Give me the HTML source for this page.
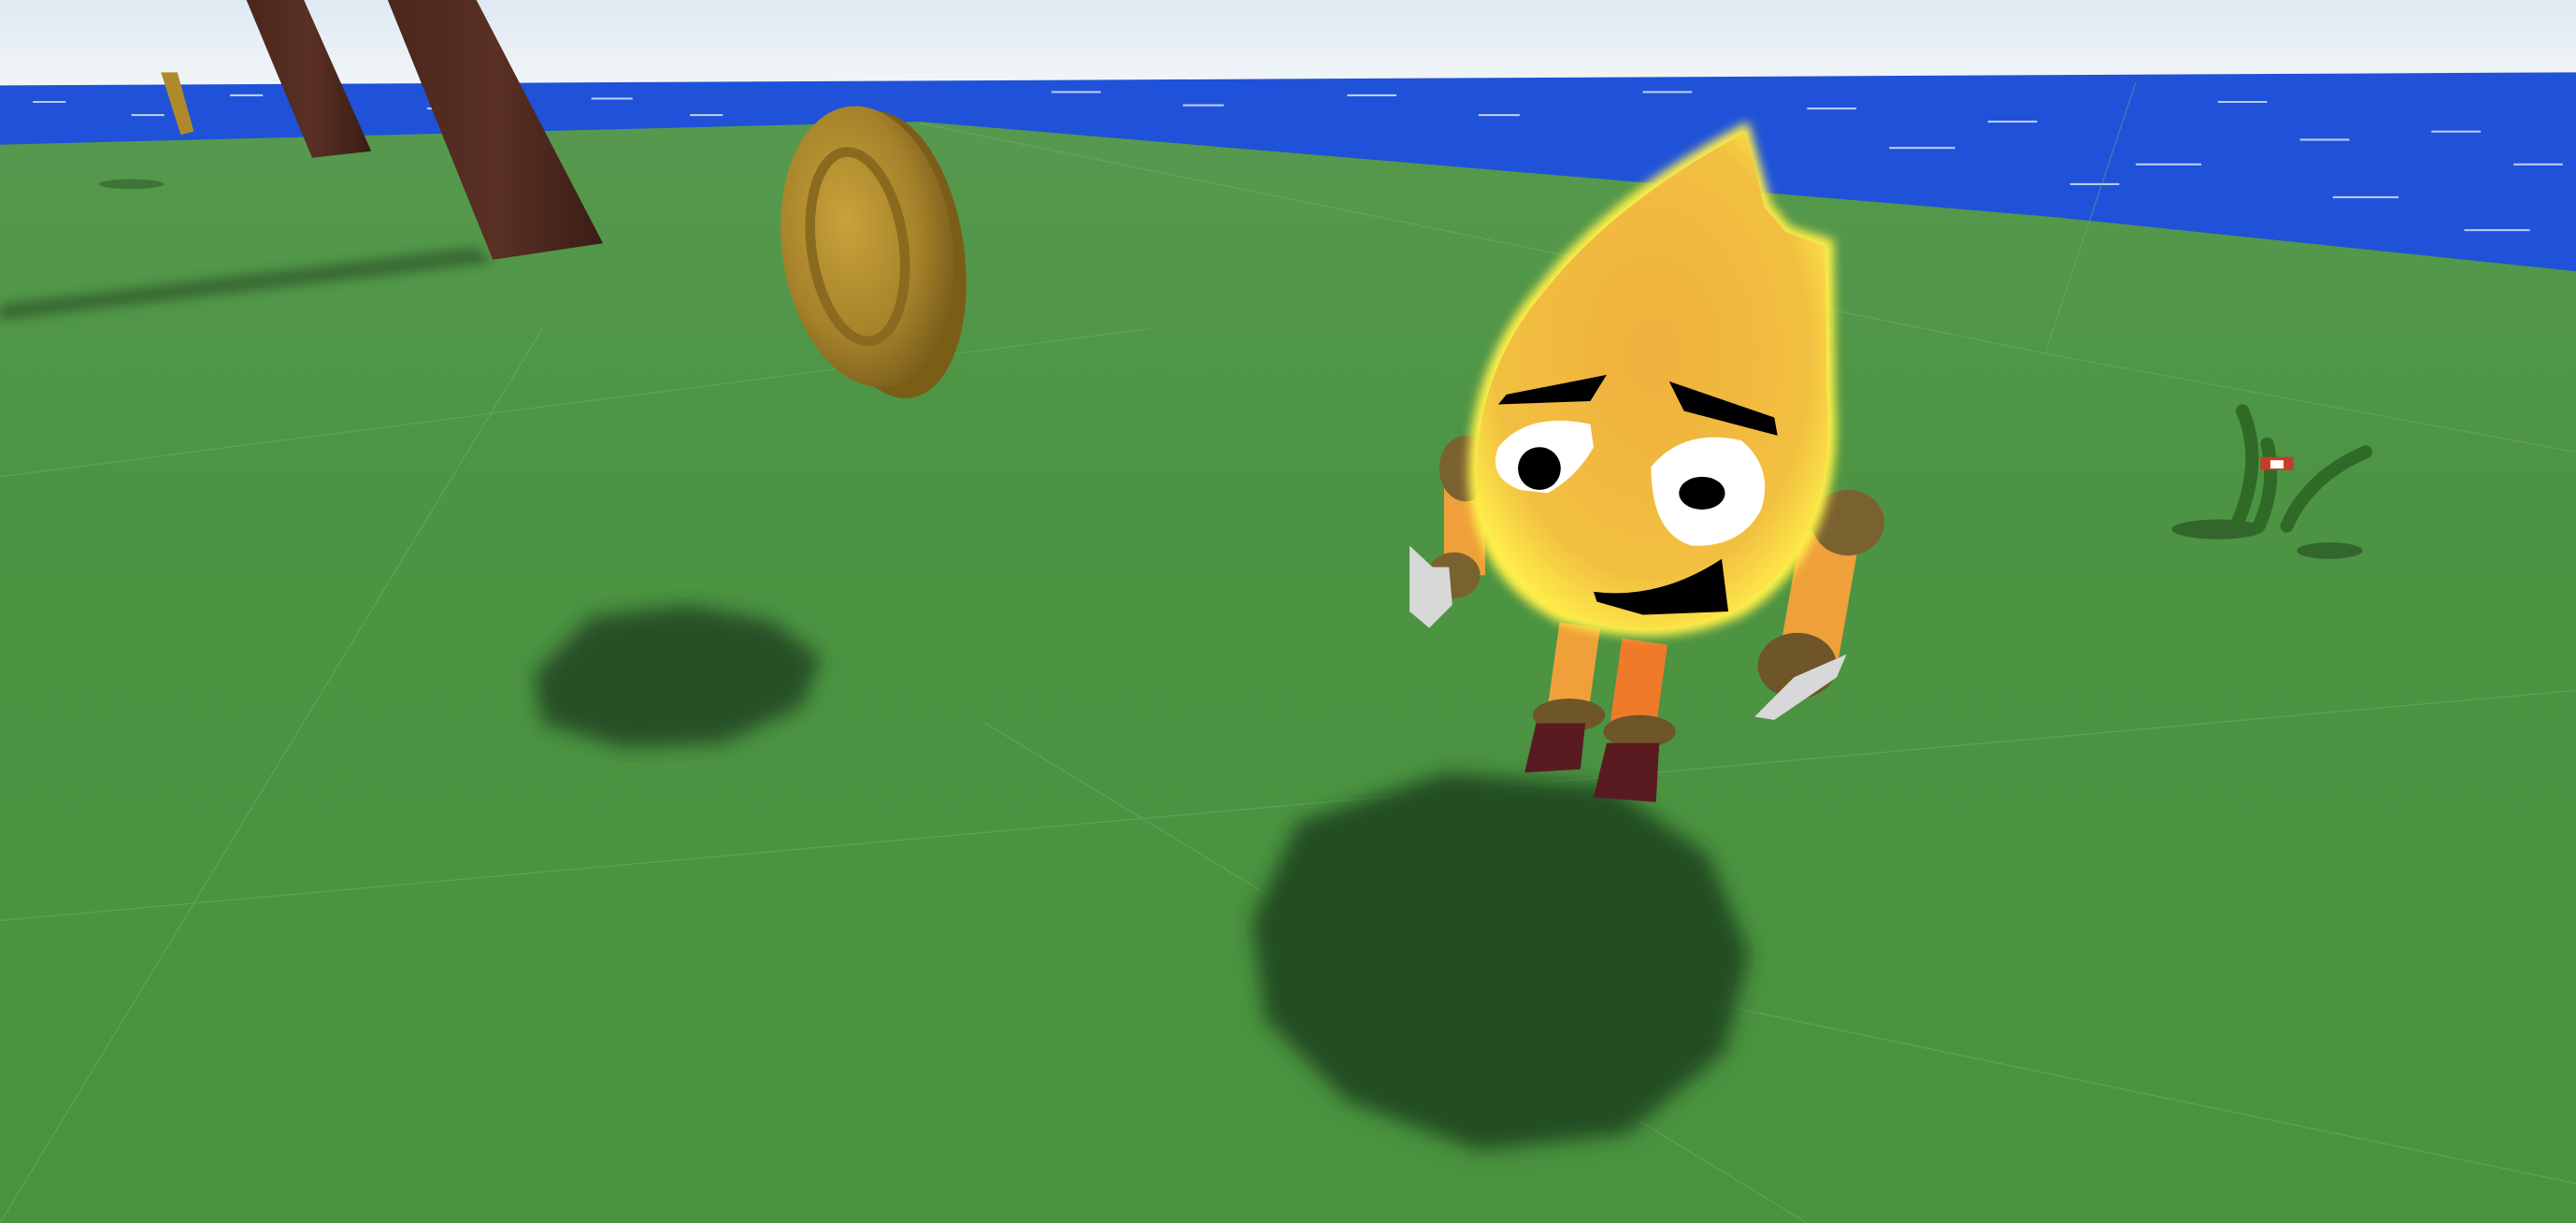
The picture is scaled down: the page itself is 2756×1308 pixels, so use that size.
<!DOCTYPE html>
<html><head><meta charset="utf-8"><style>
html,body{margin:0;padding:0;width:2756px;height:1308px;overflow:hidden;background:#4e9a45}
svg{display:block}
</style></head><body>
<svg width="2756" height="1308" viewBox="0 0 1568 744" preserveAspectRatio="none" xmlns="http://www.w3.org/2000/svg">
<defs>
<linearGradient id="sky" x1="0" y1="0" x2="0" y2="1"><stop offset="0" stop-color="#dfe9f2"/><stop offset="1" stop-color="#f4f7f9"/></linearGradient>
<linearGradient id="gr" x1="0" y1="0" x2="0" y2="1"><stop offset="0" stop-color="#5a9a52"/><stop offset="0.4" stop-color="#4c9443"/><stop offset="1" stop-color="#4a923f"/></linearGradient>
<radialGradient id="coin" cx="0.4" cy="0.4" r="0.7"><stop offset="0" stop-color="#c9a23a"/><stop offset="0.6" stop-color="#a5822a"/><stop offset="1" stop-color="#6e5418"/></radialGradient>
<radialGradient id="head" cx="0.5" cy="0.45" r="0.6"><stop offset="0" stop-color="#efb03e"/><stop offset="0.75" stop-color="#f2c040"/><stop offset="1" stop-color="#fff04a"/></radialGradient>
<linearGradient id="trunk" x1="0" y1="0" x2="1" y2="0"><stop offset="0" stop-color="#4a261c"/><stop offset="0.5" stop-color="#5a3024"/><stop offset="1" stop-color="#3a1d15"/></linearGradient>
<filter id="blur"><feGaussianBlur stdDeviation="6"/></filter>
<filter id="glow"><feGaussianBlur stdDeviation="3"/></filter>
</defs>
<rect width="1568" height="744" fill="url(#gr)"/>
<rect width="1568" height="60" fill="url(#sky)"/>
<polygon points="0,52 1568,44 1568,165 1250,132 560,74 0,88" fill="#1f52d8"/>
<g stroke="#dfe8ff" stroke-width="1.2" opacity="0.8">
<line x1="20" y1="62" x2="40" y2="62"/><line x1="80" y1="70" x2="100" y2="70"/><line x1="140" y1="58" x2="160" y2="58"/><line x1="260" y1="66" x2="280" y2="66"/><line x1="360" y1="60" x2="385" y2="60"/><line x1="420" y1="70" x2="440" y2="70"/><line x1="640" y1="56" x2="670" y2="56"/><line x1="720" y1="64" x2="745" y2="64"/><line x1="820" y1="58" x2="850" y2="58"/><line x1="900" y1="70" x2="925" y2="70"/><line x1="1000" y1="56" x2="1030" y2="56"/><line x1="1100" y1="66" x2="1130" y2="66"/><line x1="1150" y1="90" x2="1190" y2="90"/><line x1="1210" y1="74" x2="1240" y2="74"/><line x1="1300" y1="100" x2="1340" y2="100"/><line x1="1350" y1="62" x2="1380" y2="62"/><line x1="1420" y1="120" x2="1460" y2="120"/><line x1="1480" y1="80" x2="1510" y2="80"/><line x1="1500" y1="140" x2="1540" y2="140"/><line x1="1530" y1="100" x2="1560" y2="100"/><line x1="1400" y1="85" x2="1430" y2="85"/><line x1="1260" y1="112" x2="1290" y2="112"/>
</g>
<g stroke="#7cb874" stroke-width="0.7" opacity="0.4" fill="none">
<line x1="560" y1="75" x2="1245" y2="215"/><line x1="1245" y1="215" x2="1300" y2="50"/><line x1="1245" y1="215" x2="1568" y2="275"/>
<line x1="0" y1="290" x2="700" y2="200"/><line x1="0" y1="560" x2="1568" y2="420"/><line x1="600" y1="440" x2="1100" y2="744"/><line x1="330" y1="200" x2="0" y2="744"/><line x1="800" y1="560" x2="1568" y2="720"/>
</g>
<ellipse cx="80" cy="112" rx="20" ry="3" fill="#2e5e2a" opacity="0.6"/>
<polygon points="0,185 0,195 300,160 290,150" fill="#2f5a2a" opacity="0.7" filter="url(#glow)"/>
<polygon points="150,0 185,0 226,92 190,96" fill="url(#trunk)"/>
<polygon points="236,0 290,0 367,148 300,158" fill="url(#trunk)"/>
<polygon points="98,44 108,44 118,80 110,82" fill="#b08a2a"/>
<path d="M360,375 L420,368 L470,378 L500,400 L488,430 L440,452 L380,455 L330,440 L325,410 Z" fill="#254f25" filter="url(#blur)"/>
<path d="M790,500 L880,470 L980,478 L1040,520 L1065,580 L1050,640 L990,690 L900,700 L820,670 L770,620 L762,560 Z" fill="#244e24" filter="url(#blur)"/>
<ellipse cx="1350" cy="322" rx="28" ry="6" fill="#2c5a28" opacity="0.8"/>
<ellipse cx="1418" cy="335" rx="20" ry="5" fill="#2c5a28" opacity="0.8"/>
<ellipse cx="542" cy="155" rx="45" ry="88" fill="#7a5e18" transform="rotate(-8 542 155)"/>
<ellipse cx="528" cy="150" rx="52" ry="86" fill="url(#coin)" transform="rotate(-8 528 150)"/>
<ellipse cx="522" cy="150" rx="28" ry="58" fill="none" stroke="#8a6a1e" stroke-width="6" transform="rotate(-8 522 150)"/>
<g stroke="#2f6a27" stroke-width="8" fill="none" stroke-linecap="round">
<path d="M1365,250 Q1378,280 1362,318"/><path d="M1380,270 Q1386,295 1375,320"/><path d="M1440,275 Q1405,290 1392,320"/>
</g>
<rect x="1376" y="278" width="20" height="8" fill="#c83a2a"/><rect x="1382" y="280" width="8" height="5" fill="#fff"/>
<rect x="879" y="290" width="25" height="60" fill="#f0a03a"/>
<ellipse cx="892" cy="285" rx="16" ry="20" fill="#7a6230"/>
<ellipse cx="885" cy="350" rx="16" ry="14" fill="#7a6230"/>
<path d="M858,332 L872,345 L882,345 L884,368 L870,382 L858,372 Z" fill="#d8d8d8"/>
<rect x="1090" y="325" width="36" height="80" fill="#f0a03a" transform="rotate(10 1110 360)"/>
<ellipse cx="1125" cy="318" rx="22" ry="20" fill="#7a6230"/>
<ellipse cx="1094" cy="405" rx="24" ry="20" fill="#6e5628"/>
<path d="M1068,436 L1092,412 L1124,398 L1118,412 L1080,438 Z" fill="#d8d8d8"/>
<rect x="945" y="380" width="25" height="62" fill="#f0a03a" transform="rotate(8 957 410)"/>
<rect x="983" y="390" width="28" height="60" fill="#ee7a2a" transform="rotate(8 997 420)"/>
<ellipse cx="955" cy="435" rx="22" ry="10" fill="#6e5628"/>
<ellipse cx="998" cy="445" rx="22" ry="10" fill="#6e5628"/>
<path d="M935,440 L965,440 L962,468 L928,470 Z" fill="#5a1a22"/>
<path d="M978,452 L1010,452 L1008,488 L970,485 Z" fill="#5a1a22"/>
<path d="M1064,74 L1078,124 L1090,138 L1116,146 L1117,240 Q1124,334 1062,374 Q1010,398 948,378 Q891,348 894,280 Q897,218 938,172 Q980,118 1064,74 Z" fill="#fff04a" filter="url(#glow)"/>
<path d="M1063,80 L1074,126 L1087,141 L1111,150 L1112,240 Q1119,330 1059,369 Q1010,393 950,373 Q897,344 899,280 Q902,221 941,176 Q982,124 1063,80 Z" fill="url(#head)"/>
<path d="M917,240 L978,228 L968,244 L912,246 Z" fill="#000"/>
<path d="M1016,232 L1080,254 L1082,265 L1025,250 Z" fill="#000"/>
<path d="M912,272 Q930,250 968,258 L970,272 Q960,290 942,300 L925,298 Q905,290 912,272 Z" fill="#fff"/>
<circle cx="937" cy="285" r="13" fill="#000"/>
<path d="M1005,284 Q1025,260 1060,268 Q1080,285 1072,310 Q1060,333 1030,332 Q1005,325 1005,284 Z" fill="#fff"/>
<ellipse cx="1036" cy="300" rx="14" ry="10" fill="#000"/>
<path d="M970,360 Q1010,365 1048,340 L1052,372 L1000,374 L972,366 Z" fill="#000"/>
</svg>
</body></html>
